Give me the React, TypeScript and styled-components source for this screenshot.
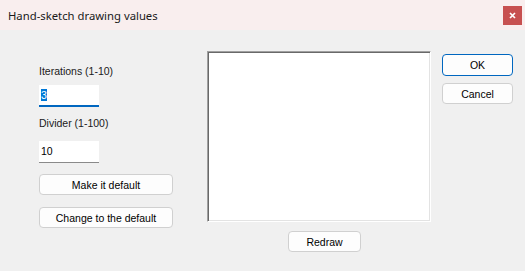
import styled, { createGlobalStyle } from 'styled-components';

const GlobalStyle = createGlobalStyle`
  html, body {
    margin: 0;
    padding: 0;
    background: #f0f0f0;
  }
  body {
    width: 525px;
    height: 271px;
    overflow: hidden;
    font-family: 'Liberation Sans', Arial, sans-serif;
    font-size: 10.5px;
    color: #000;
  }
`;

function Field({ value, focused }: { value: string; focused?: boolean }) {
  return (
    <TextField $focused={focused}>
      {focused ? <Selected>{value}</Selected> : value}
    </TextField>
  );
}

export default function App() {
  return (
    <>
      <GlobalStyle />
      <Window>
        <TitleBar>
          <Title>Hand-sketch drawing values</Title>
          <CloseButton aria-label="Close">
            <svg width="7" height="7" viewBox="0 0 7 7">
              <path d="M1 1 L6 6 M6 1 L1 6" stroke="#fff" strokeWidth="1.7" />
            </svg>
          </CloseButton>
        </TitleBar>
        <Body>
          <LeftColumn>
            <Label>Iterations (1-10)</Label>
            <Field value="3" focused />
            <Label $top={8}>Divider (1-100)</Label>
            <FieldGap />
            <Field value="10" />
            <WideButton $top={11}>Make it default</WideButton>
            <WideButton $top={12}>Change to the default</WideButton>
          </LeftColumn>
          <CanvasColumn>
            <Canvas />
            <RedrawButton>Redraw</RedrawButton>
          </CanvasColumn>
          <RightColumn>
            <DialogButton $primary>OK</DialogButton>
            <DialogButton>Cancel</DialogButton>
          </RightColumn>
        </Body>
      </Window>
    </>
  );
}

const Window = styled.div`
  width: 525px;
  height: 271px;
  display: flex;
  flex-direction: column;
  background: #f0f0f0;
`;

const TitleBar = styled.div`
  height: 30px;
  display: flex;
  align-items: center;
  justify-content: space-between;
  padding: 0 3px 0 8px;
  background: #f9eeee;
`;

const Title = styled.span`
  font-family: 'Noto Sans', sans-serif;
  font-size: 11.3px;
  color: #1a1a1a;
`;

const CloseButton = styled.div`
  width: 19px;
  height: 19px;
  display: flex;
  align-items: center;
  justify-content: center;
  background: #c75050;
`;

const Body = styled.div`
  display: flex;
  align-items: flex-start;
  padding: 21px 0 0 39px;
`;

const LeftColumn = styled.div`
  width: 134px;
  display: flex;
  flex-direction: column;
  align-items: flex-start;
  margin-top: 12px;
`;

const Label = styled.div<{ $top?: number }>`
  line-height: 16px;
  height: 16px;
  margin-top: ${(p) => p.$top ?? 0}px;
  margin-bottom: 6px;
  color: #1a1a1a;
`;

const FieldGap = styled.div`
  height: 4px;
`;

const TextField = styled.div<{ $focused?: boolean }>`
  box-sizing: border-box;
  width: 60px;
  height: 22px;
  background: #fff;
  padding: 3px 0 0 2px;
  line-height: 14px;
  border-bottom: ${(p) => (p.$focused ? '2px solid #0067c0' : '1px solid #8a8a8a')};
`;

const Selected = styled.span`
  display: inline-block;
  background: #0078d7;
  color: #fff;
  line-height: 12px;
`;

const ButtonBase = styled.button`
  box-sizing: border-box;
  font-family: 'Liberation Sans', Arial, sans-serif;
  font-size: 10.5px;
  color: #000;
  background: #fdfdfd;
  border: 1px solid #d0d0d0;
  border-radius: 4px;
  padding: 0;
  line-height: 16px;
`;

const WideButton = styled(ButtonBase)<{ $top: number }>`
  width: 134px;
  height: 21px;
  margin-top: ${(p) => p.$top}px;
`;

const CanvasColumn = styled.div`
  display: flex;
  flex-direction: column;
  margin-left: 34px;
`;

const Canvas = styled.div`
  box-sizing: border-box;
  width: 224px;
  height: 171px;
  background: #fff;
  border: 1px solid;
  border-color: #a0a0a0 #ffffff #ffffff #a0a0a0;
  box-shadow: inset 1px 1px 0 #696969, inset -1px -1px 0 #e3e3e3;
`;

const RedrawButton = styled(ButtonBase)`
  width: 73px;
  height: 21px;
  margin: 9px 0 0 81px;
`;

const RightColumn = styled.div`
  display: flex;
  flex-direction: column;
  gap: 7px;
  margin: 3px 0 0 11px;
`;

const DialogButton = styled(ButtonBase)<{ $primary?: boolean }>`
  width: 71px;
  height: ${(p) => (p.$primary ? 22 : 21)}px;
  border-color: ${(p) => (p.$primary ? '#0067c0' : '#d0d0d0')};
`;
